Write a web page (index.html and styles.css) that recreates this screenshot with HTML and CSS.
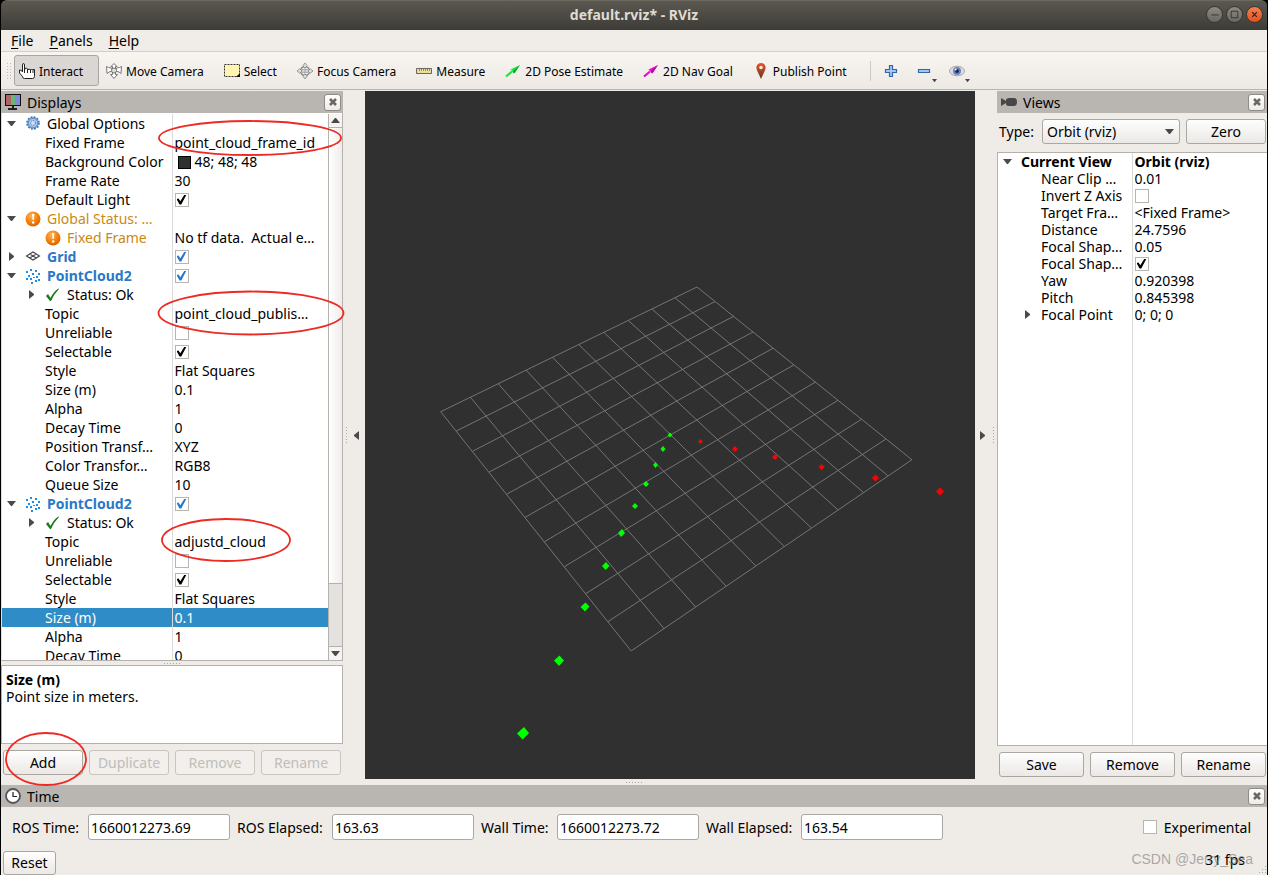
FILE: index.html
```html
<!DOCTYPE html>
<html lang="en">
<head>
<meta charset="utf-8">
<title>default.rviz* - RViz</title>
<link rel="stylesheet" href="styles.css">
</head>
<body>
<svg class="defs" aria-hidden="true">
  <defs>
    <radialGradient id="warn" cx=".4" cy=".3" r=".8"><stop offset="0" stop-color="#ffb45a"/><stop offset=".6" stop-color="#f57900"/><stop offset="1" stop-color="#d35c00"/></radialGradient>
    <linearGradient id="pin" x1="0" y1="0" x2="0" y2="1"><stop offset="0" stop-color="#e8502e"/><stop offset="1" stop-color="#5f3a1c"/></linearGradient>
    <symbol id="i-down" viewBox="0 0 9 5"><path d="M0 0h9L5 5H4z" fill="#4a4a4a"/></symbol>
    <symbol id="i-right" viewBox="0 0 5 9"><path d="M0 0v9L5 5V4z" fill="#4a4a4a"/></symbol>
    <symbol id="i-close" viewBox="0 0 8 8"><path d="M1 1l6 6M7 1L1 7" stroke="#6b6864" stroke-width="2.6" fill="none"/></symbol>
    <symbol id="i-warn" viewBox="0 0 16 16"><circle cx="8" cy="8" r="7.5" fill="url(#warn)"/><path d="M7 3h2.4l-.5 6H7.5z" fill="#fff"/><circle cx="8.2" cy="11.5" r="1.3" fill="#fff"/></symbol>
    <symbol id="i-check" viewBox="0 0 16 16"><path d="M1 9l2-2 2.500 4Q9 4 13.500 1.500L14 2Q9 7 6 14H5z" fill="#1c7a1c"/></symbol>
    <symbol id="i-cloud" viewBox="0 0 16 16"><path d="M5 1h2v2H5zM10 2h2v2h-2zM1 3h2v2H1zM7 5h2v2H7zM13 5h2v2h-2zM3 7h2v2H3zM11 8h2v2h-2zM1 10h2v2H1zM5 10h2v2H5zM8 9h2v1H8zM13 11h2v2h-2zM10 12h2v2h-2zM6 14h2v2H6z" fill="#1e8be6"/></symbol>
    <symbol id="i-gear" viewBox="0 0 16 16"><circle cx="8" cy="7" r="6" fill="#9fbfe6" stroke="#3f76b8" stroke-width="1.600" stroke-dasharray="1.8 1.340"/><circle cx="8" cy="7" r="4.800" fill="#a8c4e8" stroke="#4a80c0" stroke-width=".8"/><circle cx="8" cy="7" r="2.300" fill="#d5e3f5" stroke="#3f76b8" stroke-dasharray="1 1"/></symbol>
    <symbol id="i-grid" viewBox="0 0 16 16"><path d="M1.500 7L8 3l6.500 4L8 11zM4.700 5l6.600 4M11.300 5l-6.600 4" fill="none" stroke="#444" stroke-width="1.100"/></symbol>
  </defs>
</svg>

<div class="window">
  <header class="titlebar">
    <h1>default.rviz* - RViz</h1>
    <div class="winbtns">
      <button class="winbtn" aria-label="Minimize"><svg viewBox="0 0 16 16"><path d="M4.500 8.500h8" stroke="#35342f" fill="none"/></svg></button>
      <button class="winbtn" aria-label="Maximize"><svg viewBox="0 0 16 16"><path d="M4.500 4.500h7v7h-7z" stroke="#35342f" fill="none"/></svg></button>
      <button class="winbtn winbtn-close" aria-label="Close"><svg viewBox="0 0 16 16"><path d="M5.500 5.500l5 5M10.500 5.500l-5 5" stroke="#3a2218" stroke-width="1.400" fill="none"/></svg></button>
    </div>
  </header>

  <nav class="menubar">
    <button><u>F</u>ile</button><button><u>P</u>anels</button><button><u>H</u>elp</button>
  </nav>

  <div class="toolbar" role="toolbar">
    <span class="grip"></span>
    <button class="tool tool-active"><svg viewBox="0 0 16 16"><path d="M3.500 9V2Q3.500.5 4.500.5T5.500 2V7L6 5.500Q8 4.500 8.500 6V7Q10 5.500 11.500 6.500V7.500Q12 6.200 13.500 6.500H15.500V13.500Q15.500 15.500 13.500 15.500H5.500Q3.500 15.500 3.500 13.500L.5 10V7Q2.500 6.500 3.500 9" fill="#fff" stroke="#222"/><path d="M5.500 6v4M8.500 6.500V10M11.500 7v3M14 7v3" stroke="#222"/></svg>Interact</button>
    <button class="tool"><svg viewBox="0 0 16 16"><g fill="#fff" stroke="#777"><path d="M8 .5l3 3H9.500v3h-3v-3H5zM8 15.500l3.500-4h-2v-2h-3v2h-2z"/><path d="M.5 3.500l2 1 3 .5 1 3-3.500 1-2 1.500zM15.500 3.500l-2 1-3 .5-1 3 3.500 1 2 1.500z"/><circle cx="8" cy="7.500" r="2.500" fill="#ddd"/></g></svg>Move Camera</button>
    <button class="tool"><svg viewBox="0 0 16 16"><path d="M.5 1.500h15v12H.5z" fill="#fff5b0" stroke="#333" stroke-dasharray="2 1"/><path d="M16 10v4h-4z" fill="#111"/></svg>Select</button>
    <button class="tool"><svg viewBox="0 0 16 16"><circle cx="8" cy="8" r="4.500" fill="#eee" stroke="#888" stroke-width="1.500"/><path d="M5 8h6M8 5v6M5 6.500h6M5 9.500h6" stroke="#999" stroke-width=".7"/><path d="M8 0l2 2.500-1 2H7l-1-2zM8 16l2-2.500-1-2H7l-1 2zM0 8l2.500-2 2 1v2l-2 1zM16 8l-2.500-2-2 1v2l2 1z" fill="#ddd" stroke="#888" stroke-width=".8"/></svg>Focus Camera</button>
    <button class="tool"><svg viewBox="0 0 16 16"><path d="M.5 5.500h15v5H.5z" fill="#eadf9c" stroke="#666"/><path d="M3.500 6v2M5.500 6v2M7.500 6v2M9.500 6v2M11.500 6v2M13.500 6v2" stroke="#777" stroke-width=".8"/></svg>Measure</button>
    <button class="tool"><svg viewBox="0 0 16 16"><path d="M1 13.500l6-5" stroke="#0eea3c" stroke-width="2.200"/><path d="M15 2L5.500 6.500 7.500 8.500 9.500 10.500z" fill="#0fef3e"/><path d="M15 2L7.500 8.500l1.500 2z" fill="#159c32"/></svg>2D Pose Estimate</button>
    <button class="tool"><svg viewBox="0 0 16 16"><path d="M1 13.500l6-5" stroke="#f000d8" stroke-width="2.200"/><path d="M15 2L5.500 6.500 7.500 8.500 9.500 10.500z" fill="#f800df"/><path d="M15 2L7.500 8.500l1.500 2z" fill="#a3108f"/></svg>2D Nav Goal</button>
    <button class="tool"><svg viewBox="0 0 16 16"><path d="M8 16L4.500 8.500Q3 5.500 3.500 3.500 4.500 0 8 0t4.500 3.500Q13 5.500 11.500 8.500z" fill="url(#pin)"/><circle cx="8" cy="4.500" r="1.800" fill="#f8eee8"/></svg>Publish Point</button>
    <span class="sep"></span>
    <button class="tool tool-icon" aria-label="Add tool"><svg viewBox="0 0 16 16"><path d="M6.500 2.500h3v4h4v3h-4v4h-3v-4h-4v-3h4z" fill="#a9c6ea" stroke="#2f67ab" stroke-width="1.200"/></svg></button>
    <button class="tool tool-icon" aria-label="Remove tool"><svg viewBox="0 0 16 16"><path d="M2.500 6.500h11v3h-11z" fill="#a9c6ea" stroke="#2f67ab" stroke-width="1.200"/></svg><svg class="drop"><use href="#i-down"/></svg></button>
    <button class="tool tool-icon" aria-label="Visibility"><svg viewBox="0 0 16 16"><ellipse cx="8" cy="8" rx="7.500" ry="4.800" fill="#ddd" stroke="#aaa"/><circle cx="8" cy="8" r="4" fill="#6a80c0"/><circle cx="8" cy="8" r="1.900" fill="#1d2340"/><circle cx="6.700" cy="6.500" r="1" fill="#fff"/></svg><svg class="drop"><use href="#i-down"/></svg></button>
  </div>

  <main class="workspace">
    <section class="dock dock-left" aria-label="Displays">
      <div class="dock-title">
        <svg viewBox="0 0 16 16"><path d="M0 0h16v12H0z" fill="#111"/><path d="M1 1h5v10H1z" fill="#b06468"/><path d="M6 1h4v10H6z" fill="#69b778"/><path d="M10 1h5v10h-5z" fill="#8289d8"/><path d="M7 12h2v2h3v2H3v-2h4z" fill="#222"/></svg>
        <h2>Displays</h2>
        <button class="close" aria-label="Close Displays"><svg><use href="#i-close"/></svg></button>
      </div>
      <div class="tree-box">
        <div class="tree-view">
        <table class="tree">
          <tr><td><div class="n l0"><button class="tog" aria-label="Collapse"><svg class="dn"><use href="#i-down"/></svg></button><svg class="ic"><use href="#i-gear"/></svg>Global Options</div></td><td></td></tr>
          <tr><td><div class="n leaf">Fixed Frame</div></td><td>point_cloud_frame_id</td></tr>
          <tr><td><div class="n leaf">Background Color</div></td><td><span class="swatch"></span>48; 48; 48</td></tr>
          <tr><td><div class="n leaf">Frame Rate</div></td><td>30</td></tr>
          <tr><td><div class="n leaf">Default Light</div></td><td><input type="checkbox" checked aria-label="Default Light"></td></tr>
          <tr class="warn"><td><div class="n l0"><button class="tog" aria-label="Collapse"><svg class="dn"><use href="#i-down"/></svg></button><svg class="ic"><use href="#i-warn"/></svg>Global Status: …</div></td><td></td></tr>
          <tr class="warn"><td><div class="n leaf"><svg class="ic"><use href="#i-warn"/></svg>Fixed Frame</div></td><td class="plain">No tf data.&nbsp; Actual e…</td></tr>
          <tr class="disp"><td><div class="n l0"><button class="tog" aria-label="Expand"><svg class="rt"><use href="#i-right"/></svg></button><svg class="ic"><use href="#i-grid"/></svg>Grid</div></td><td><input type="checkbox" checked aria-label="Grid"></td></tr>
          <tr class="disp"><td><div class="n l0"><button class="tog" aria-label="Collapse"><svg class="dn"><use href="#i-down"/></svg></button><svg class="ic"><use href="#i-cloud"/></svg>PointCloud2</div></td><td><input type="checkbox" checked aria-label="PointCloud2"></td></tr>
          <tr><td><div class="n l1"><button class="tog" aria-label="Expand"><svg class="rt"><use href="#i-right"/></svg></button><svg class="ic"><use href="#i-check"/></svg>Status: Ok</div></td><td></td></tr>
          <tr><td><div class="n leaf">Topic</div></td><td>point_cloud_publis…</td></tr>
          <tr><td><div class="n leaf">Unreliable</div></td><td><input type="checkbox" aria-label="Unreliable"></td></tr>
          <tr><td><div class="n leaf">Selectable</div></td><td><input type="checkbox" checked aria-label="Selectable"></td></tr>
          <tr><td><div class="n leaf">Style</div></td><td>Flat Squares</td></tr>
          <tr><td><div class="n leaf">Size (m)</div></td><td>0.1</td></tr>
          <tr><td><div class="n leaf">Alpha</div></td><td>1</td></tr>
          <tr><td><div class="n leaf">Decay Time</div></td><td>0</td></tr>
          <tr><td><div class="n leaf">Position Transf…</div></td><td>XYZ</td></tr>
          <tr><td><div class="n leaf">Color Transfor…</div></td><td>RGB8</td></tr>
          <tr><td><div class="n leaf">Queue Size</div></td><td>10</td></tr>
          <tr class="disp"><td><div class="n l0"><button class="tog" aria-label="Collapse"><svg class="dn"><use href="#i-down"/></svg></button><svg class="ic"><use href="#i-cloud"/></svg>PointCloud2</div></td><td><input type="checkbox" checked aria-label="PointCloud2"></td></tr>
          <tr><td><div class="n l1"><button class="tog" aria-label="Expand"><svg class="rt"><use href="#i-right"/></svg></button><svg class="ic"><use href="#i-check"/></svg>Status: Ok</div></td><td></td></tr>
          <tr><td><div class="n leaf">Topic</div></td><td>adjustd_cloud</td></tr>
          <tr><td><div class="n leaf">Unreliable</div></td><td><input type="checkbox" aria-label="Unreliable"></td></tr>
          <tr><td><div class="n leaf">Selectable</div></td><td><input type="checkbox" checked aria-label="Selectable"></td></tr>
          <tr><td><div class="n leaf">Style</div></td><td>Flat Squares</td></tr>
          <tr class="selected"><td><div class="n leaf">Size (m)</div></td><td>0.1</td></tr>
          <tr><td><div class="n leaf">Alpha</div></td><td>1</td></tr>
          <tr><td><div class="n leaf">Decay Time</div></td><td>0</td></tr>
        </table>
        </div>
        <div class="scroll">
          <button class="scroll-btn" aria-label="Scroll up"><svg class="up"><use href="#i-down"/></svg></button>
          <div class="scroll-track"><div class="scroll-thumb"></div></div>
          <button class="scroll-btn" aria-label="Scroll down"><svg class="dn"><use href="#i-down"/></svg></button>
        </div>
      </div>
      <div class="hsplit"><span class="dots-h"></span></div>
      <div class="help"><strong>Size (m)</strong><p>Point size in meters.</p></div>
      <div class="buttons">
        <button class="btn">Add</button><button class="btn" disabled>Duplicate</button><button class="btn" disabled>Remove</button><button class="btn" disabled>Rename</button>
      </div>
      <svg class="marks" aria-hidden="true">
        <g fill="none" stroke="#ee2a24" stroke-width="1.800">
          <ellipse cx="249" cy="47" rx="91" ry="17"/>
          <ellipse cx="250" cy="222" rx="92.500" ry="21.500"/>
          <ellipse cx="225" cy="449" rx="64" ry="21"/>
          <ellipse cx="45" cy="668" rx="40" ry="26"/>
        </g>
      </svg>
    </section>

    <div class="vsplit"><span class="dots-v"></span><button class="fold" aria-label="Hide left panel"><svg class="rt flip"><use href="#i-right"/></svg></button></div>

    <section class="view3d" aria-label="3D view">
      <svg viewBox="0 0 610 688" preserveAspectRatio="xMidYMid meet">
        <path fill="none" stroke="#7d7d7d" stroke-width=".9" d="M75.700 320.700L266.100 560M105.400 306.300L299.100 537.700M133.500 293L330.600 516M161 279L360.900 495M187.600 266.300L390.600 474.700M213.900 253.700L419.100 455.300M238.700 241.300L446.100 436.700M263.500 229.700L472.800 418.700M287.200 218.300L498.300 401.300M310.200 207L522.800 384.700M332 196L546.900 368.700M332 196L75.700 320.700M349.800 210.700L91.300 340M368.700 225.300L108 360M388 241L124.300 381M408 257.300L142 403M428.700 274L160.200 426.300M450.600 291L179.400 450.700M473.100 309.300L199.400 475.700M496.500 328.300L220.600 502.700M520.900 348L242.800 530.700M546.900 368.700L266.100 560"/>
        <path fill="#0f0" d="M305 341.500l2.500 2.500-2.500 2.500-2.500-2.500zM298 355l2.500 3-2.500 3-2.500-3zM290.500 371l2.500 3-2.500 3-2.500-3zM281 390l3 3-3 3-3-3zM270 412l3 3-3 3-3-3zM257 438l3 4-4 4-3-4zM241 471l3.500 4-4 4-3.500-4zM220.500 511.500l4 4-4.500 5-4.500-4.500zM194.500 564.500l4.500 5-5 5.500-5-5.500zM159 636l5 6-6.500 6.500-5.500-6z"/>
        <path fill="#f00" d="M335.500 348l2.500 2.500-2.500 2.500-2.500-2.500zM370 355l3 3-3 3-3-3zM410 363l3 3-3 3-3-3zM456.500 373l3 3-3 3-3-3zM510.500 383.500l3.500 3.500-3.500 3.500-3.500-3.500zM575 396.500l4 4-4 4-4-4z"/>
      </svg>
    </section>

    <div class="vsplit vsplit-right"><button class="fold" aria-label="Hide right panel"><svg class="rt"><use href="#i-right"/></svg></button><span class="dots-v"></span></div>

    <section class="dock dock-right" aria-label="Views">
      <div class="dock-title">
        <svg viewBox="0 0 16 16"><path d="M0 4l5 3V5.500Q6 4 8 4h5q3 0 3 4t-3 4H8Q6 12 5 10.500V9L0 12z" fill="#474747"/></svg>
        <h2>Views</h2>
        <button class="close" aria-label="Close Views"><svg><use href="#i-close"/></svg></button>
      </div>
      <div class="type-row">
        <label for="type">Type:</label>
        <span class="combo"><select id="type"><option>Orbit (rviz)</option></select><svg class="dn"><use href="#i-down"/></svg></span>
        <button class="btn">Zero</button>
      </div>
      <div class="tree-box tree-box-views">
        <table class="tree tree-tight">
          <tr class="bold"><td><div class="n v0"><button class="tog" aria-label="Collapse"><svg class="dn"><use href="#i-down"/></svg></button>Current View</div></td><td>Orbit (rviz)</td></tr>
          <tr><td><div class="n leaf">Near Clip …</div></td><td>0.01</td></tr>
          <tr><td><div class="n leaf">Invert Z Axis</div></td><td><input type="checkbox" aria-label="Invert Z Axis"></td></tr>
          <tr><td><div class="n leaf">Target Fra…</div></td><td>&lt;Fixed Frame&gt;</td></tr>
          <tr><td><div class="n leaf">Distance</div></td><td>24.7596</td></tr>
          <tr><td><div class="n leaf">Focal Shap…</div></td><td>0.05</td></tr>
          <tr><td><div class="n leaf">Focal Shap…</div></td><td><input type="checkbox" checked aria-label="Focal Shape Fixed Size"></td></tr>
          <tr><td><div class="n leaf">Yaw</div></td><td>0.920398</td></tr>
          <tr><td><div class="n leaf">Pitch</div></td><td>0.845398</td></tr>
          <tr><td><div class="n v1"><button class="tog" aria-label="Expand"><svg class="rt"><use href="#i-right"/></svg></button>Focal Point</div></td><td>0; 0; 0</td></tr>
          <tr class="filler"><td></td><td></td></tr>
        </table>
      </div>
      <div class="buttons">
        <button class="btn">Save</button><button class="btn">Remove</button><button class="btn">Rename</button>
      </div>
    </section>
  </main>

  <div class="hsplit hsplit-wide"><span class="dots-h"></span></div>
  <section class="time" aria-label="Time">
    <div class="dock-title">
      <svg viewBox="0 0 16 16"><circle cx="8" cy="8" r="7" fill="#fff" stroke="#555" stroke-width="1.800"/><path d="M8 4v4.500h4" fill="none" stroke="#222" stroke-width="1.200"/></svg>
      <h2>Time</h2>
      <button class="close" aria-label="Close Time"><svg><use href="#i-close"/></svg></button>
    </div>
    <div class="time-row">
      <label for="rt">ROS Time:</label><input id="rt" type="text" value="1660012273.69">
      <label for="re" class="wide">ROS Elapsed:</label><input id="re" type="text" value="163.63">
      <label for="wt">Wall Time:</label><input id="wt" type="text" value="1660012273.72">
      <label for="we" class="wide">Wall Elapsed:</label><input id="we" type="text" value="163.54">
      <label class="exp"><input type="checkbox">Experimental</label>
    </div>
  </section>
  <footer class="status">
    <button class="btn">Reset</button>
    <span class="fps">31 fps</span>
    <span class="watermark">CSDN @Jerry_Sea</span>
    <svg class="sizegrip" viewBox="0 0 10 10" aria-hidden="true"><path d="M8 0h1v1H8zM5 3h1v1H5zM8 3h1v1H8zM2 6h1v1H2zM5 6h1v1H5zM8 6h1v1H8zM0 9h1v1H0zM2 9h1v1H2zM5 9h1v1H5zM8 9h1v1H8z" fill="#aaa"/></svg>
  </footer>
</div>
</body>
</html>
```
FILE: styles.css
```css
* { box-sizing: border-box; }
body {
  margin: 0;
  background: #000;
  color: #000;
  font: 14px/19px "Noto Sans", "Open Sans", sans-serif;
}
h1, h2, p { margin: 0; font: inherit; }
button, input, select { font: inherit; color: inherit; margin: 0; padding: 0; border: 0; background: none; }
svg { display: block; flex: none; }
.defs { position: absolute; width: 0; height: 0; }

.window {
  display: flex;
  flex-direction: column;
  min-height: 100vh;
  padding: 0 1px;
}
.titlebar {
  position: relative;
  display: flex;
  align-items: center;
  justify-content: center;
  height: 30px;
  padding-bottom: 2px;
  border-radius: 6px 6px 0 0;
  border-top: 1px solid #6b6860;
  background: linear-gradient(#5b5850, #3d3c37);
}
.titlebar h1 { color: #dfdbd2; font-weight: 700; }
.winbtns { position: absolute; right: 4px; top: 5px; display: flex; gap: 3px; }
.winbtn {
  width: 17px;
  height: 17px;
  border: 1px solid #35342f;
  border-radius: 50%;
  background: linear-gradient(#8d8a82, #6a6861);
}
.winbtn svg { width: 15px; height: 15px; }
.winbtn-close { background: linear-gradient(#f4814f, #e4501e); }

.menubar {
  display: flex;
  gap: 16px;
  height: 22px;
  padding-left: 10px;
  background: #f0ece7;
  border-bottom: 1px solid #d2cfca;
}
.menubar u { text-underline-offset: 2px; }

.toolbar {
  display: flex;
  align-items: center;
  gap: 2px;
  height: 38px;
  padding-left: 5px;
  font-size: 12px;
  background: linear-gradient(#f8f5f1, #edeae5);
  border-bottom: 1px solid #b8b4af;
}
.grip {
  width: 6px;
  height: 17px;
  background: radial-gradient(circle, #bbb 0 1px, transparent 1px) 0 0 / 3px 3px;
}
.tool {
  position: relative;
  display: flex;
  align-items: center;
  gap: 4px;
  height: 31px;
  padding: 1px 12px 0 4px;
  border: 1px solid transparent;
  border-radius: 3px;
  white-space: nowrap;
}
.tool > svg { width: 16px; height: 16px; }
.tool-active { min-width: 85px; background: #dad6d3; border-color: #aaa5a0; }
.tool-icon { width: 31px; padding: 0 7px; }
.tool > .drop { position: absolute; right: 1px; bottom: 3px; width: 5px; height: 3px; }
.sep { width: 2px; height: 20px; margin: 0 1px 0 8px; border-left: 1px solid #ccc8c3; }

.workspace {
  flex: 1;
  display: flex;
  min-height: 0;
  padding-top: 1px;
  background: #efebe7;
}
.dock { position: relative; display: flex; flex-direction: column; }
.dock-left { width: 342px; }
.dock-right { width: 270px; }
.dock-title {
  display: flex;
  align-items: center;
  gap: 6px;
  height: 22px;
  padding: 0 2px 0 4px;
  background: #b9b5b1;
}
.dock-title > svg { width: 16px; height: 16px; }
.dock-title h2 { flex: 1; }
.close {
  display: grid;
  place-items: center;
  width: 17px;
  height: 17px;
  border: 1px solid #8f8b87;
  border-radius: 3px;
  background: linear-gradient(#fff, #eeebe8);
}
.close svg { width: 8px; height: 8px; }

.tree-box {
  flex: 1 1 0;
  display: flex;
  min-height: 0;
  overflow: hidden;
  background: #fff;
  border: 1px solid #b5b1ad;
}
.dock-left .tree-box { border-top: 0; border-left-color: #e3e0dc; padding-top: 1px; }
.tree-view { flex: 1; height: 548px; overflow: hidden; }
.tree { width: 100%; border-collapse: collapse; table-layout: fixed; white-space: nowrap; }
.tree td { height: 19px; padding: 0; overflow: hidden; }
.tree td:first-child { width: 170px; border-right: 1px solid #dcdad8; }
.tree td + td { padding-left: 2px; }
.tree-tight { height: 100%; line-height: 17px; }
.tree-tight td { height: 17px; }
.tree-tight td:first-child { width: 134px; }
.tree-tight .filler td { height: auto; }
.n { display: flex; align-items: center; }
.l0 { padding-left: 0; }
.l1, .v1 { padding-left: 20px; }
.leaf { padding-left: 43px; }
.tog { display: grid; place-items: center; width: 19px; height: 16px; margin-right: 4px; }
.ic { width: 16px; height: 16px; margin-right: 6px; }
.dn, .up { width: 9px; height: 5px; }
.up { transform: rotate(180deg); }
.rt { width: 5px; height: 9px; }
.flip { transform: rotate(180deg); }
.warn { color: #c98a10; }
.warn .plain { color: #000; }
.disp { color: #2a78c8; font-weight: 700; }
.bold { font-weight: 700; }
.selected { background: #308cc6; color: #fff; }
.swatch {
  display: inline-block;
  width: 13px;
  height: 13px;
  margin: 0 4px 0 3px;
  vertical-align: -2px;
  background: #303030;
  border: 1px solid #000;
}
input[type="checkbox"] {
  appearance: none;
  display: block;
  width: 14px;
  height: 14px;
  background: #fff;
  border: 1px solid #b8b5b1;
}
input[type="checkbox"]:checked::before {
  content: "";
  display: block;
  width: 10px;
  height: 10px;
  margin: 1px;
  background: currentColor;
  clip-path: polygon(0 45%, 20% 40%, 38% 68%, 80% 0, 100% 0, 48% 100%, 30% 100%);
}

.scroll { display: flex; flex-direction: column; width: 14px; border-left: 1px solid #b5b1ad; background: #e4e2df; }
.scroll-btn { display: grid; place-items: center; height: 13px; background: #f6f4f2; }
.scroll-track { flex: 1; border: solid #b5b1ad; border-width: 1px 0; }
.scroll-thumb { height: 88%; background: linear-gradient(90deg, #fff, #efedeb); border-bottom: 1px solid #b5b1ad; }

.hsplit { display: grid; place-items: center; height: 4px; }
.hsplit-wide { height: 6px; background: #efebe7; }
.dots-h { width: 16px; height: 1px; background: repeating-linear-gradient(90deg, #aaa6a2 0 1px, transparent 1px 3px); }
.dots-v { width: 1px; height: 16px; background: repeating-linear-gradient(#aaa6a2 0 1px, transparent 1px 3px); }
.help {
  height: 79px;
  padding: 5px 4px;
  line-height: 17px;
  background: #fff;
  border: 1px solid #b5b1ad;
}
.buttons { display: flex; gap: 6px; padding: 6px 2px 4px; }
.btn {
  flex: 1;
  height: 25px;
  border: 1px solid #aaa6a2;
  border-radius: 3px;
  background: linear-gradient(#fefefe, #ebe8e5);
}
.btn:disabled { color: #c0bdba; border-color: #c8c5c1; background: #f2efec; }
.marks { position: absolute; inset: 0; width: 100%; height: 100%; overflow: visible; pointer-events: none; z-index: 1; }

.vsplit { display: flex; align-items: center; justify-content: space-between; width: 22px; padding: 0 6px 0 3px; }
.vsplit-right { padding: 0 3px 0 5px; }
.fold { width: 5px; height: 9px; }
.view3d { flex: 1; min-width: 0; background: #303030; }
.view3d svg { width: 100%; height: 100%; }

.type-row { display: flex; align-items: center; gap: 6px; padding: 6px 1px 8px 2px; }
.type-row label { width: 37px; }
.type-row .btn { flex: none; width: 80px; }
.combo { position: relative; flex: 1; }
.combo select {
  display: block;
  appearance: none;
  width: 100%;
  height: 25px;
  padding-left: 4px;
  border: 1px solid #aaa6a2;
  border-radius: 3px;
  background: linear-gradient(#fefefe, #ebe8e5);
}
.combo svg { position: absolute; right: 6px; top: 10px; pointer-events: none; }
.dock-right .buttons { padding: 6px 1px 2px 2px; }
.tree-box-views { border-right: 0; }

.time { background: #efebe7; }
.time-row { display: flex; align-items: center; gap: 7px; padding: 7px 16px 0 11px; white-space: nowrap; }
.time-row label { width: 69px; }
.time-row .wide { width: 88px; }
.time-row input[type="text"] {
  width: 142px;
  height: 26px;
  padding: 0 2px;
  background: #fff;
  border: 1px solid #aaa6a2;
  border-radius: 3px;
}
.time-row .exp { display: flex; align-items: center; gap: 7px; width: auto; margin-left: auto; }

.status {
  position: relative;
  display: flex;
  align-items: center;
  justify-content: space-between;
  padding: 10px 22px 1px 2px;
  background: #efebe7;
}
.status .btn { flex: none; width: 53px; height: 24px; }
.fps { padding-bottom: 6px; }
.watermark {
  position: absolute;
  right: 14px;
  bottom: 8px;
  color: #77777799;
  font: 14px/17px "Liberation Sans", sans-serif;
}
.sizegrip { position: absolute; right: 0; bottom: 0; width: 10px; height: 10px; }
```
